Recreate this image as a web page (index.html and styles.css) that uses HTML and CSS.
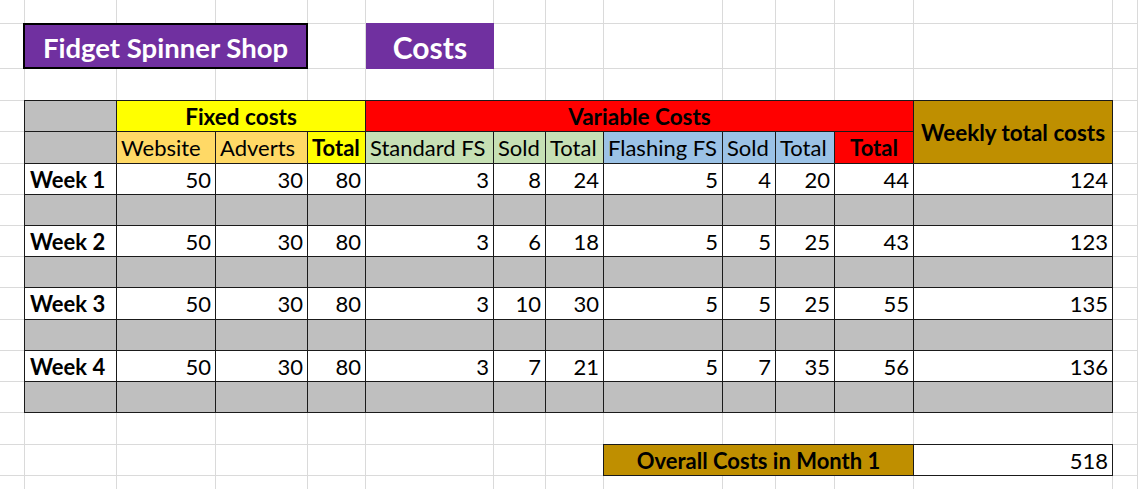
FILE: index.html
```html
<!DOCTYPE html>
<html lang="en">
<head>
<meta charset="utf-8">
<title>Fidget Spinner Shop – Costs</title>
<link rel="stylesheet" href="styles.css">
</head>
<body>
<div class="sheet">
  <div class="gl-cols">
    <div></div><div></div><div></div><div></div><div></div><div></div><div></div>
    <div></div><div></div><div></div><div></div><div></div><div></div><div></div>
  </div>
  <div class="gl-rows">
    <div></div><div></div><div></div><div></div><div></div><div></div><div></div><div></div>
    <div></div><div></div><div></div><div></div><div></div><div></div><div></div><div></div>
  </div>
  <div class="content">
    <div class="title shop">Fidget Spinner Shop</div>
    <div class="title costs">Costs</div>

    <div class="table">
      <div class="c gray"></div>
      <div class="c group fixed">Fixed costs</div>
      <div class="c group variable">Variable Costs</div>
      <div class="c group weekly">Weekly total costs</div>

      <div class="c gray"></div>
      <div class="c hd orange">Website</div>
      <div class="c hd orange">Adverts</div>
      <div class="c hd yellow bold">Total</div>
      <div class="c hd green">Standard FS</div>
      <div class="c hd green">Sold</div>
      <div class="c hd green">Total</div>
      <div class="c hd blue">Flashing FS</div>
      <div class="c hd blue">Sold</div>
      <div class="c hd blue">Total</div>
      <div class="c hd red bold center">Total</div>

      <div class="c week">Week 1</div>
      <div class="c num">50</div><div class="c num">30</div><div class="c num">80</div>
      <div class="c num">3</div><div class="c num">8</div><div class="c num">24</div>
      <div class="c num">5</div><div class="c num">4</div><div class="c num">20</div>
      <div class="c num">44</div><div class="c num">124</div>

      <div class="c gray"></div><div class="c gray"></div><div class="c gray"></div><div class="c gray"></div>
      <div class="c gray"></div><div class="c gray"></div><div class="c gray"></div><div class="c gray"></div>
      <div class="c gray"></div><div class="c gray"></div><div class="c gray"></div><div class="c gray"></div>

      <div class="c week">Week 2</div>
      <div class="c num">50</div><div class="c num">30</div><div class="c num">80</div>
      <div class="c num">3</div><div class="c num">6</div><div class="c num">18</div>
      <div class="c num">5</div><div class="c num">5</div><div class="c num">25</div>
      <div class="c num">43</div><div class="c num">123</div>

      <div class="c gray"></div><div class="c gray"></div><div class="c gray"></div><div class="c gray"></div>
      <div class="c gray"></div><div class="c gray"></div><div class="c gray"></div><div class="c gray"></div>
      <div class="c gray"></div><div class="c gray"></div><div class="c gray"></div><div class="c gray"></div>

      <div class="c week">Week 3</div>
      <div class="c num">50</div><div class="c num">30</div><div class="c num">80</div>
      <div class="c num">3</div><div class="c num">10</div><div class="c num">30</div>
      <div class="c num">5</div><div class="c num">5</div><div class="c num">25</div>
      <div class="c num">55</div><div class="c num">135</div>

      <div class="c gray"></div><div class="c gray"></div><div class="c gray"></div><div class="c gray"></div>
      <div class="c gray"></div><div class="c gray"></div><div class="c gray"></div><div class="c gray"></div>
      <div class="c gray"></div><div class="c gray"></div><div class="c gray"></div><div class="c gray"></div>

      <div class="c week">Week 4</div>
      <div class="c num">50</div><div class="c num">30</div><div class="c num">80</div>
      <div class="c num">3</div><div class="c num">7</div><div class="c num">21</div>
      <div class="c num">5</div><div class="c num">7</div><div class="c num">35</div>
      <div class="c num">56</div><div class="c num">136</div>

      <div class="c gray"></div><div class="c gray"></div><div class="c gray"></div><div class="c gray"></div>
      <div class="c gray"></div><div class="c gray"></div><div class="c gray"></div><div class="c gray"></div>
      <div class="c gray"></div><div class="c gray"></div><div class="c gray"></div><div class="c gray"></div>
    </div>

    <div class="overall">
      <div class="overall-label">Overall Costs in Month 1</div>
      <div class="overall-value">518</div>
    </div>
  </div>
</div>
</body>
</html>
```
FILE: styles.css
```css
:root {
  --cols: 25px 92px 99px 92px 58px 128px 52px 58px 119px 53px 59px 79px 199px 25px;
  --rows: 24px 45px 32px 31px 32px 31px 31px 31px 31px 32px 31px 31px 31px 32px 31px 14px;
  --grid: #dadada;
  --line: #1a1a1a;
}

html, body {
  margin: 0;
  padding: 0;
  background: #fff;
}

body {
  font-family: "Lato", "Liberation Sans", sans-serif;
  font-size: 22px;
  color: #000;
}

.sheet {
  display: grid;
  width: 1138px;
  height: 489px;
  overflow: hidden;
}

.gl-cols, .gl-rows, .content {
  grid-area: 1 / 1;
}

.gl-cols {
  display: grid;
  grid-template-columns: var(--cols);
}
.gl-cols > div {
  border-right: 1px solid var(--grid);
}

.gl-rows {
  display: grid;
  grid-template-rows: var(--rows);
}
.gl-rows > div {
  border-bottom: 1px solid var(--grid);
}

.content {
  display: grid;
  grid-template-columns: var(--cols);
  grid-template-rows: var(--rows);
}

.title {
  background: #7030a0;
  color: #fff;
  font-weight: 700;
  display: flex;
  align-items: center;
  justify-content: center;
  padding-top: 2px;
  box-sizing: border-box;
}

.shop {
  grid-column: 2 / 5;
  grid-row: 2;
  margin: -1px 0 0 -2px;
  border: 2px solid #000;
  font-size: 27.5px;
}

.costs {
  grid-column: 6;
  grid-row: 2;
  margin-top: -1px;
  font-size: 30px;
}

.table {
  grid-column: 2 / 14;
  grid-row: 4 / 14;
  margin: -1px 0 0 -1px;
  border-top: 1px solid var(--line);
  border-left: 1px solid var(--line);
  display: grid;
  grid-template-columns: 92px 99px 92px 58px 128px 52px 58px 119px 53px 59px 79px 199px;
  grid-template-rows: 31px 32px 31px 31px 31px 31px 32px 31px 31px 31px;
  background: #fff;
}

.c {
  box-sizing: border-box;
  border-right: 1px solid var(--line);
  border-bottom: 1px solid var(--line);
  display: flex;
  align-items: center;
  padding: 0 4px 0 4px;
  white-space: nowrap;
  overflow: hidden;
}

.gray { background: #bfbfbf; }
.orange { background: #ffd966; }
.yellow { background: #ffff00; }
.green { background: #c6e0b4; }
.blue { background: #9bc2e6; }
.red { background: #ff0000; }

.bold { font-weight: 700; }
.center { justify-content: center; }

.hd { padding-left: 4px; }

.group {
  font-weight: 700;
  font-size: 22.5px;
  justify-content: center;
}
.fixed {
  grid-column: span 3;
  background: #ffff00;
}
.variable {
  grid-column: span 7;
  background: #ff0000;
}
.weekly {
  grid-row: span 2;
  background: #bf8f00;
}

.week {
  font-weight: 700;
  padding-left: 5px;
}

.num {
  justify-content: flex-end;
  padding-right: 4px;
}

.overall {
  grid-column: 9 / 14;
  grid-row: 15;
  margin: -1px 0 0 -1px;
  border-top: 1px solid var(--line);
  border-left: 1px solid var(--line);
  display: grid;
  grid-template-columns: 310px 199px;
}

.overall-label,
.overall-value {
  box-sizing: border-box;
  border-right: 1px solid var(--line);
  border-bottom: 1px solid var(--line);
  display: flex;
  align-items: center;
}

.overall-label {
  background: #bf8f00;
  font-weight: 700;
  justify-content: center;
}

.overall-value {
  background: #fff;
  justify-content: flex-end;
  padding-right: 4px;
}
```
